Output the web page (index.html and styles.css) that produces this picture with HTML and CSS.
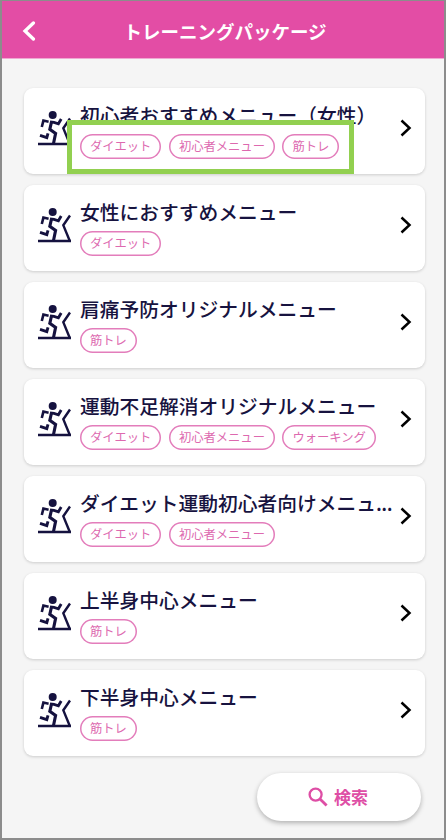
FILE: index.html
```html
<!DOCTYPE html>
<html lang="ja">
<head>
<meta charset="utf-8">
<title>トレーニングパッケージ</title>
<link rel="stylesheet" href="styles.css">
</head>
<body>
<svg class="defs" width="0" height="0" aria-hidden="true">
  <symbol id="run" viewBox="0 0 34 35">
    <circle cx="14.7" cy="4" r="4" fill="currentColor"/>
    <g fill="none" stroke="currentColor">
      <path d="M0 33H33" stroke-width="2.4"/>
      <path d="M32 7.5L25.3 17.2L31.8 33" stroke-width="2.4"/>
      <path d="M3.8 16L5.4 9.6L10.6 10.8" stroke-width="2.6"/>
      <path d="M12 11L16 11.4L20.4 12.8L23.2 8" stroke-width="2.8"/>
      <path d="M13.6 10.5L11.8 18.4L17.6 22.4L15.4 33" stroke-width="3.1"/>
      <path d="M2 24.4L8.8 26.6L10 22.4" stroke-width="2.9"/>
    </g>
  </symbol>
  <symbol id="next" viewBox="0 0 12 18">
    <path d="M1.5 1.5L9.5 9L1.5 16.5" fill="none" stroke="currentColor" stroke-width="2.5"/>
  </symbol>
</svg>
<div class="screen">
  <header class="bar">
    <svg class="back" viewBox="0 0 14 20"><path d="M11.4 2L3 10L11.4 18" fill="none" stroke="currentColor" stroke-width="3.3" stroke-linecap="round"/></svg>
    <h1 class="bar-title">トレーニングパッケージ</h1>
  </header>
  <main class="list">
    <article class="card">
      <svg class="run"><use href="#run"/></svg>
      <div class="info"><h2 class="title">初心者おすすめメニュー（女性）</h2><div class="tags"><span class="tag">ダイエット</span><span class="tag">初心者メニュー</span><span class="tag">筋トレ</span></div></div>
      <svg class="next"><use href="#next"/></svg>
      <div class="highlight"></div>
    </article>
    <article class="card">
      <svg class="run"><use href="#run"/></svg>
      <div class="info"><h2 class="title">女性におすすめメニュー</h2><div class="tags"><span class="tag">ダイエット</span></div></div>
      <svg class="next"><use href="#next"/></svg>
    </article>
    <article class="card">
      <svg class="run"><use href="#run"/></svg>
      <div class="info"><h2 class="title">肩痛予防オリジナルメニュー</h2><div class="tags"><span class="tag">筋トレ</span></div></div>
      <svg class="next"><use href="#next"/></svg>
    </article>
    <article class="card">
      <svg class="run"><use href="#run"/></svg>
      <div class="info"><h2 class="title">運動不足解消オリジナルメニュー</h2><div class="tags"><span class="tag">ダイエット</span><span class="tag">初心者メニュー</span><span class="tag">ウォーキング</span></div></div>
      <svg class="next"><use href="#next"/></svg>
    </article>
    <article class="card">
      <svg class="run"><use href="#run"/></svg>
      <div class="info"><h2 class="title">ダイエット運動初心者向けメニュ<span class="dots">...</span></h2><div class="tags"><span class="tag">ダイエット</span><span class="tag">初心者メニュー</span></div></div>
      <svg class="next"><use href="#next"/></svg>
    </article>
    <article class="card">
      <svg class="run"><use href="#run"/></svg>
      <div class="info"><h2 class="title">上半身中心メニュー</h2><div class="tags"><span class="tag">筋トレ</span></div></div>
      <svg class="next"><use href="#next"/></svg>
    </article>
    <article class="card">
      <svg class="run"><use href="#run"/></svg>
      <div class="info"><h2 class="title">下半身中心メニュー</h2><div class="tags"><span class="tag">筋トレ</span></div></div>
      <svg class="next"><use href="#next"/></svg>
    </article>
  </main>
  <footer class="foot">
    <button class="search">
      <svg class="glass" viewBox="0 0 20 20"><circle cx="7.6" cy="7.6" r="6" fill="none" stroke="currentColor" stroke-width="2.3"/><path d="M12 12L18.6 18.6" stroke="currentColor" stroke-width="2.8"/></svg>
      <span>検索</span>
    </button>
  </footer>
</div>
</body>
</html>
```
FILE: styles.css
```css
* { box-sizing: border-box; }
body {
  margin: 0;
  font-family: "Noto Sans CJK JP", sans-serif;
}
.defs { display: block; height: 0; }
.screen {
  width: 446px;
  height: 840px;
  background: #f5f5f5;
  border: 2px solid #8c8c8c;
  border-top-width: 1px;
  overflow: hidden;
}
.bar {
  height: 58px;
  padding: 2px 0 0 20px;
  display: grid;
  grid-template-columns: 14px 1fr 30px;
  align-items: center;
  background: #e34da5;
  border-bottom: 1px solid #efa9d2;
  color: #fff;
}
.back { width: 14px; height: 20px; }
.bar-title {
  margin: 0;
  text-align: center;
  font-size: 18.5px;
  line-height: 28px;
  font-weight: 700;
}
.list {
  display: flex;
  flex-direction: column;
  gap: 11px;
  padding: 28.5px 19px 0 22px;
}
.card {
  position: relative;
  display: flex;
  height: 86px;
  padding: 0 13px 0 14px;
  background: #fff;
  border-radius: 9px;
  box-shadow: 0 1px 3px rgba(0, 0, 0, .17);
}
.run {
  flex: none;
  width: 34px;
  height: 35px;
  margin-top: 23.5px;
  color: #15123f;
}
.info {
  flex: 1;
  min-width: 0;
  padding: 12.5px 0 0 8px;
}
.title {
  margin: 0;
  font-size: 19.75px;
  line-height: 30px;
  font-weight: 500;
  color: #17133f;
  white-space: nowrap;
}
.dots { letter-spacing: -.6px; }
.tags {
  display: flex;
  gap: 7.5px;
  margin-top: 4px;
}
.tag {
  height: 25px;
  padding: 0 10px;
  border-radius: 13px;
  box-shadow: inset 0 0 0 1.5px #e37dbb;
  font-size: 12.3px;
  line-height: 24px;
  color: #dd69af;
  white-space: nowrap;
}
.next {
  flex: none;
  width: 12px;
  height: 18px;
  margin-top: 31.5px;
  color: #000;
}
.highlight {
  position: absolute;
  left: 43px;
  top: 32.5px;
  width: 287px;
  height: 54px;
  border: 5px solid #92d050;
}
.foot {
  display: flex;
  justify-content: flex-end;
  padding: 17.5px 23px 0 0;
}
.search {
  display: flex;
  align-items: center;
  justify-content: center;
  gap: 6px;
  width: 164px;
  height: 48px;
  padding: 0 2px 0 0;
  border: 0;
  border-radius: 24px;
  background: #fff;
  box-shadow: 0 2px 5px rgba(0, 0, 0, .28);
  color: #de4ea5;
  font: 700 17px/26px "Noto Sans CJK JP", sans-serif;
}
.glass { width: 20px; height: 20px; }
```
